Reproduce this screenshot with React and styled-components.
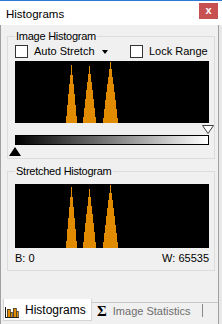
import React from 'react';
import styled, { createGlobalStyle } from 'styled-components';

const GlobalStyle = createGlobalStyle`
  html, body {
    margin: 0;
    padding: 0;
    background: #e8e8e8;
  }
  body {
    font-family: "Liberation Sans", Arial, sans-serif;
    color: #000;
  }
`;

const PEAKS_TOP = [
  { c: 56, h: 58, w: 5.5 },
  { c: 74, h: 57, w: 6.5 },
  { c: 95, h: 61, w: 7.5 },
];

const PEAKS_BOTTOM = [
  { c: 56, h: 61, w: 5.5 },
  { c: 74, h: 59, w: 6.5 },
  { c: 95, h: 63, w: 7.5 },
];

export default function App() {
  return (
    <>
      <GlobalStyle />
      <Window>
        <TitleBar>
          <Title>Histograms</Title>
          <CloseButton>x</CloseButton>
        </TitleBar>
        <Frame>
          <Content>
            <Group $pb={2}>
              <Legend>Image Histogram</Legend>
              <CheckRow>
                <CheckItem $w={115}>
                  <CheckBox />
                  <CheckLabel>Auto Stretch</CheckLabel>
                  <DropArrow />
                </CheckItem>
                <CheckItem>
                  <CheckBox />
                  <CheckLabel>Lock Range</CheckLabel>
                </CheckItem>
              </CheckRow>
              <Histogram height={62} peaks={PEAKS_TOP} $mt={3} />
              <MarkerRow $align="flex-end" $mt={2}>
                <Marker $shift="0 -5px 0 0">
                  <svg width="12" height="9" viewBox="0 0 12 9">
                    <polygon points="0.5,0.5 11.5,0.5 6,8.5" fill="#fff" stroke="#404040" />
                  </svg>
                </Marker>
              </MarkerRow>
              <Gradient />
              <MarkerRow $align="flex-start" $mt={2}>
                <Marker $shift="0 0 0 -6px">
                  <svg width="12" height="9" viewBox="0 0 12 9">
                    <polygon points="6,0 12,9 0,9" fill="#000" />
                  </svg>
                </Marker>
              </MarkerRow>
            </Group>
            <Group $mt={6} $pb={5}>
              <Legend>Stretched Histogram</Legend>
              <Histogram height={64} peaks={PEAKS_BOTTOM} $mt={4} />
              <RangeRow>
                <span>B: 0</span>
                <span>W: 65535</span>
              </RangeRow>
            </Group>
          </Content>
          <TabStrip>
            <ActiveTab>
              <HistIcon />
              <TabLabel>Histograms</TabLabel>
            </ActiveTab>
            <InactiveTab>
              <Sigma>Σ</Sigma>
              <TabLabel $muted>Image Statistics</TabLabel>
            </InactiveTab>
            <TabFiller />
          </TabStrip>
        </Frame>
      </Window>
    </>
  );
}

// stepped spikes, one rect per pixel column
const Histogram = ({ height, peaks, $mt }) => {
  const cols = [];
  for (let x = 0; x < 194; x++) {
    let v = 0;
    peaks.forEach(p => {
      const d = Math.abs(x - p.c);
      if (d < p.w) v = Math.max(v, p.h * Math.pow(1 - d / p.w, 0.9));
    });
    const h = Math.max(Math.round(v), v > 0 ? 5 : 0);
    if (h > 0) cols.push(<rect key={x} x={x} y={height - h} width={1} height={h} />);
  }
  return (
    <Plot $h={height} $mt={$mt}>
      <svg width="194" height={height} viewBox={`0 0 194 ${height}`}>
        <g fill="#e18c00" shapeRendering="crispEdges">
          {cols}
        </g>
      </svg>
    </Plot>
  );
};

const HistIcon = () => (
  <IconBox>
    <svg width="14" height="11" viewBox="0 0 14 11" shapeRendering="crispEdges">
      <rect x="0" y="0" width="1" height="11" fill="#1a1a1a" />
      <rect x="0" y="10" width="14" height="1" fill="#1a1a1a" />
      <rect x="2" y="2" width="3" height="8" fill="#e18c00" stroke="#2a2a2a" strokeWidth="0.7" />
      <rect x="5" y="5" width="2" height="5" fill="#e18c00" stroke="#2a2a2a" strokeWidth="0.7" />
      <rect x="8" y="1" width="3" height="9" fill="#e18c00" stroke="#2a2a2a" strokeWidth="0.7" />
      <rect x="11" y="4" width="2" height="6" fill="#e18c00" stroke="#2a2a2a" strokeWidth="0.7" />
    </svg>
  </IconBox>
);

const Window = styled.div`
  width: 222px;
  height: 324px;
  display: flex;
  flex-direction: column;
  overflow: hidden;
`;

const TitleBar = styled.div`
  height: 24px;
  flex: none;
  border-top: 1px solid #2b7bd6;
  background: #fff;
  display: flex;
  justify-content: space-between;
  align-items: flex-start;
  padding: 0 4px 0 6px;
`;

const Title = styled.div`
  font-size: 11.5px;
  line-height: 14px;
  margin-top: 6px;
`;

const CloseButton = styled.div`
  width: 19px;
  height: 16px;
  margin-top: 2px;
  background: #c75050;
  color: #fff;
  font-weight: bold;
  font-size: 11px;
  line-height: 14px;
  text-align: center;
`;

const Frame = styled.div`
  flex: 1;
  width: 219px;
  box-sizing: border-box;
  background: #f0f0f0;
  border-left: 1px solid #a0a0a0;
  border-right: 1px solid #a0a0a0;
  display: flex;
  flex-direction: column;
`;

const Content = styled.div`
  padding: 5px 0 0 6px;
`;

const Group = styled.fieldset`
  margin: ${p => p.$mt || 0}px 0 0 0;
  width: 208px;
  box-sizing: border-box;
  border: 1px solid #dcdcdc;
  padding: 2px 5px ${p => p.$pb}px 7px;
  min-width: 0;
`;

const Legend = styled.legend`
  padding: 0 1px;
  font-size: 11px;
  line-height: 13px;
  letter-spacing: -0.25px;
  color: #000;
`;

const CheckRow = styled.div`
  display: flex;
  align-items: center;
  height: 13px;
`;

const CheckItem = styled.div`
  display: flex;
  align-items: center;
  width: ${p => (p.$w ? `${p.$w}px` : 'auto')};
`;

const CheckBox = styled.div`
  width: 13px;
  height: 13px;
  box-sizing: border-box;
  border: 1px solid #333;
  background: #fff;
`;

const CheckLabel = styled.span`
  margin-left: 6px;
  font-size: 11px;
  line-height: 13px;
`;

const DropArrow = styled.div`
  margin-left: 7px;
  width: 0;
  height: 0;
  border-left: 3.5px solid transparent;
  border-right: 3.5px solid transparent;
  border-top: 4px solid #000;
`;

const Plot = styled.div`
  margin-top: ${p => p.$mt}px;
  width: 194px;
  height: ${p => p.$h}px;
  background: #000;
  svg {
    display: block;
  }
`;

const MarkerRow = styled.div`
  margin-top: ${p => p.$mt}px;
  height: 9px;
  display: flex;
  justify-content: ${p => p.$align};
`;

const Marker = styled.div`
  margin: ${p => p.$shift};
  height: 9px;
  svg {
    display: block;
  }
`;

const Gradient = styled.div`
  margin-top: 1px;
  width: 194px;
  height: 10px;
  box-sizing: border-box;
  border: 1px solid #000;
  background: linear-gradient(to right, #000, #fff);
`;

const RangeRow = styled.div`
  margin-top: 4px;
  display: flex;
  justify-content: space-between;
  font-size: 11px;
  line-height: 13px;
`;

const TabStrip = styled.div`
  margin-top: auto;
  height: 25px;
  display: flex;
  align-items: flex-start;
  padding-left: 2px;
`;

const ActiveTab = styled.div`
  height: 22px;
  box-sizing: border-box;
  width: 89px;
  background: #fff;
  border: 1px solid #d4d4d4;
  border-top: none;
  display: flex;
  align-items: center;
  padding-left: 1px;
`;

const IconBox = styled.div`
  margin-top: 5px;
  margin-right: 6px;
  svg {
    display: block;
  }
`;

const TabLabel = styled.span`
  font-size: ${p => (p.$muted ? 11 : 12)}px;
  line-height: 14px;
  color: ${p => (p.$muted ? '#6d6d6d' : '#000')};
`;

const InactiveTab = styled.div`
  margin-top: 3px;
  height: 16px;
  box-sizing: border-box;
  width: 111px;
  border-top: 1px solid #c8c8c8;
  display: flex;
  align-items: center;
  padding-left: 5px;
  position: relative;
  &::after {
    content: '';
    position: absolute;
    right: 0;
    top: 1px;
    height: 13px;
    border-right: 1px solid #8a8a8a;
  }
`;

const Sigma = styled.span`
  font-family: "Liberation Serif", "Times New Roman", serif;
  font-weight: bold;
  font-size: 15px;
  line-height: 14px;
  margin-right: 6px;
`;

const TabFiller = styled.div`
  flex: 1;
  margin-top: 3px;
  border-top: 1px solid #c8c8c8;
`;
